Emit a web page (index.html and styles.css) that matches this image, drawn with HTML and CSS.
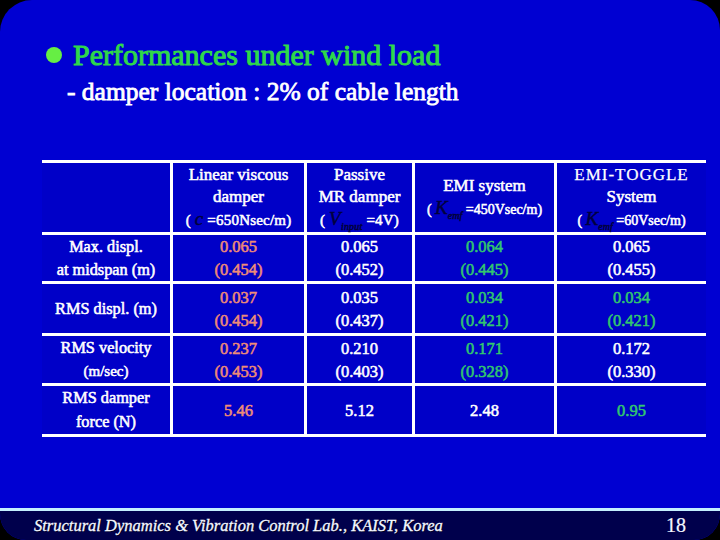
FILE: index.html
```html
<!DOCTYPE html>
<html>
<head>
<meta charset="utf-8">
<link rel="stylesheet" href="styles.css">
</head>
<body>
<div class="slide">
  <div class="title-row">
    <span class="bullet"></span>
    <h1 class="title">Performances under wind load</h1>
  </div>
  <p class="sub">- damper location : 2% of cable length</p>

  <table class="perf">
    <colgroup>
      <col class="c0"><col class="c1"><col class="c2"><col class="c3"><col class="c4">
    </colgroup>
    <tr class="head">
      <td></td>
      <td>Linear viscous<br>damper<br><span class="par">( <i class="sym big">c</i> =650Nsec/m)</span></td>
      <td>Passive<br>MR damper<br><span class="par">( <i class="sym big">V</i><sub class="sym">input</sub> =4V)</span></td>
      <td>EMI system<br><span class="par sm">( <i class="sym big">K</i><sub class="sym">emf</sub> =450Vsec/m)</span></td>
      <td><span class="spaced">EMI-TOGGLE</span><br>System<br><span class="par sm">( <i class="sym big">K</i><sub class="sym">emf</sub> =60Vsec/m)</span></td>
    </tr>
    <tr class="r1">
      <td class="lab">Max. displ.<br>at midspan (m)</td>
      <td class="o">0.065<br>(0.454)</td>
      <td class="w">0.065<br>(0.452)</td>
      <td class="g">0.064<br>(0.445)</td>
      <td class="w">0.065<br>(0.455)</td>
    </tr>
    <tr class="r2">
      <td class="lab">RMS displ. (m)</td>
      <td class="o">0.037<br>(0.454)</td>
      <td class="w">0.035<br>(0.437)</td>
      <td class="g">0.034<br>(0.421)</td>
      <td class="g">0.034<br>(0.421)</td>
    </tr>
    <tr class="r3">
      <td class="lab">RMS velocity<br><span class="small">(m/sec)</span></td>
      <td class="o">0.237<br>(0.453)</td>
      <td class="w">0.210<br>(0.403)</td>
      <td class="g">0.171<br>(0.328)</td>
      <td class="w">0.172<br>(0.330)</td>
    </tr>
    <tr class="r4">
      <td class="lab">RMS damper<br>force (N)</td>
      <td class="o">5.46</td>
      <td class="w">5.12</td>
      <td class="w">2.48</td>
      <td class="g">0.95</td>
    </tr>
  </table>

  <div class="spacer"></div>

  <footer class="foot">
    <span class="lab-name">Structural Dynamics &amp; Vibration Control Lab., KAIST, Korea</span>
    <span class="page">18</span>
  </footer>
</div>
</body>
</html>
```
FILE: styles.css
```css
html, body {
  margin: 0;
  padding: 0;
  background: #000;
}

.slide {
  width: 720px;
  height: 540px;
  background: #0000d2;
  border-radius: 32px 30px 26px 26px;
  overflow: hidden;
  display: flex;
  flex-direction: column;
  font-family: "Liberation Serif", "Times New Roman", serif;
  color: #fff;
}

.title-row {
  display: flex;
  align-items: center;
  margin-top: 39px;
  padding-left: 46px;
  height: 32px;
}

.bullet {
  width: 16px;
  height: 16px;
  border-radius: 50%;
  background: #66ee44;
  margin-right: 11px;
}

.title {
  margin: 0;
  font-size: 30px;
  line-height: 32px;
  font-weight: normal;
  -webkit-text-stroke: 1px #2fd84a;
  color: #2fd84a;
}

.sub {
  margin: 6px 0 0 67px;
  font-size: 25.5px;
  line-height: 30px;
  font-weight: normal;
  -webkit-text-stroke: 0.8px #fff;
}

.perf {
  margin: 53px 0 0 42px;
  width: 664px;
  table-layout: fixed;
  border-collapse: separate;
  border-spacing: 0;
  font-size: 16.5px;
  font-weight: normal;
}

.c0 { width: 128px; }
.c1 { width: 134px; }
.c2 { width: 108px; }
.c3 { width: 142px; }
.c4 { width: 152px; }

.perf td {
  box-sizing: border-box;
  background: #0000c8;
  border-top: 3px solid #fff;
  border-left: 3px solid #fff;
  text-align: center;
  vertical-align: middle;
  padding: 0;
  line-height: 23px;
  -webkit-text-stroke: 0.55px currentColor;
}

.perf td:first-child {
  border-left: none;
}

.perf tr:last-child td {
  border-bottom: 3px solid #fff;
}

.head td { height: 72px; line-height: 22px; font-size: 17px; }
.r1 td { height: 49px; }
.r2 td { height: 52px; }
.r3 td { height: 50px; }
.r4 td { height: 51px; }
.r4 td.lab { line-height: 24px; }

.par { font-size: 15px; letter-spacing: 0.2px; }
.par.sm { font-size: 14px; letter-spacing: 0; }
.spaced { letter-spacing: 1px; font-size: 17px; -webkit-text-stroke: 0.25px #fff; }

.sym {
  color: #00003c;
  font-style: italic;
  -webkit-text-stroke: 0.5px #00003c;
}
.sym.big { font-size: 19px; }
sub.sym {
  font-size: 10px;
  vertical-align: -5px;
  line-height: 0;
}

.lab { font-size: 16.3px; }
.small { font-size: 15px; }

.o { color: #ee8c76; }
.w { color: #ffffff; }
.g { color: #32c86e; }

.spacer { flex: 1; }

.foot {
  height: 29px;
  border-top: 3px solid #c4f0ff;
  background: #00004c;
  display: flex;
  align-items: center;
  justify-content: space-between;
  padding: 0 34px 0 34px;
}

.lab-name {
  font-style: italic;
  font-size: 16.5px;
  color: #f4f8ff;
  -webkit-text-stroke: 0.3px #f4f8ff;
  text-shadow: 1px 1px 0 #000020;
}

.page {
  font-size: 20px;
  color: #f4f8ff;
  -webkit-text-stroke: 0.2px #f4f8ff;
}
```
